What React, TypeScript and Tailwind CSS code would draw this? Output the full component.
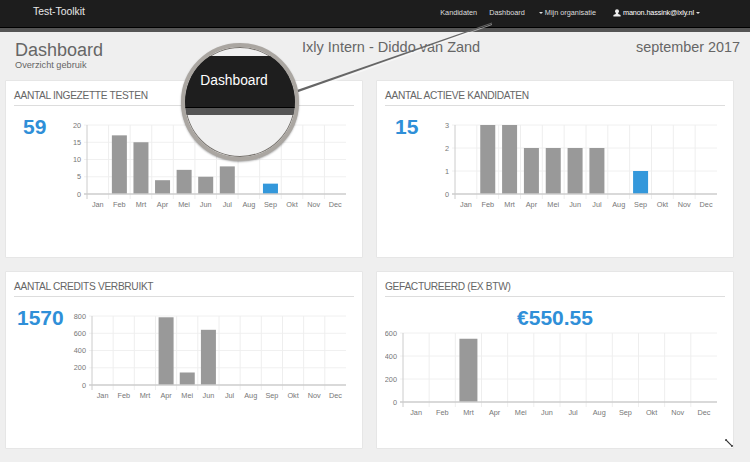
const MONTHS = ['Jan', 'Feb', 'Mrt', 'Apr', 'Mei', 'Jun', 'Jul', 'Aug', 'Sep', 'Okt', 'Nov', 'Dec']

const PLOT_TOP = 7
const PLOT_HEIGHT = 69

interface ChartProps {
  values: number[]
  max: number
  ticks: number
  axisWidth: number
  plotWidth: number
  barWidth: number
  blueIndex?: number
}

function Chart({ values, max, ticks, axisWidth, plotWidth, barWidth, blueIndex }: ChartProps) {
  const step = plotWidth / 12
  const bottom = PLOT_TOP + PLOT_HEIGHT

  return (
    <svg className="block shrink-0" height={bottom + 17} width={axisWidth + plotWidth + 2}>
      {Array.from({ length: ticks + 1 }, (_, i) => {
        const y = PLOT_TOP + (PLOT_HEIGHT * i) / ticks
        return (
          <g key={i}>
            {i < ticks && <line stroke="#f0f0f0" x1={axisWidth - 3} x2={axisWidth + plotWidth} y1={y} y2={y} />}
            <text fill="#777" fontSize="7.3" textAnchor="end" x={axisWidth - 6} y={y + 2.7}>
              {Math.round(max - (max * i) / ticks)}
            </text>
          </g>
        )
      })}
      {MONTHS.map((month, i) => {
        const x = axisWidth + step * i
        const center = x + step / 2
        const height = (values[i] / max) * PLOT_HEIGHT
        return (
          <g key={month}>
            <line stroke={i === 0 ? '#ccc' : '#eee'} x1={x} x2={x} y1={PLOT_TOP} y2={bottom + 5} />
            {values[i] > 0 && (
              <rect
                fill={i === blueIndex ? '#3498db' : '#999'}
                height={height}
                width={barWidth}
                x={center - barWidth / 2}
                y={bottom - height}
              />
            )}
            <text fill="#777" fontSize="7.3" textAnchor="middle" x={center} y={bottom + 13}>
              {month}
            </text>
          </g>
        )
      })}
      <line stroke="#ccc" strokeWidth="1.4" x1={axisWidth - 3} x2={axisWidth + plotWidth} y1={bottom} y2={bottom} />
    </svg>
  )
}

function Card({ title, children }: { title?: string; children?: React.ReactNode }) {
  return (
    <section className="relative h-[178px] rounded-[1px] border border-[#e6e6e6] bg-white px-[8px]">
      <h2 className="h-[25px] border-b border-[#ddd] pt-[8px] text-[10.2px] leading-[13px] tracking-[-0.33px] text-[#666]">{title}</h2>
      {children}
    </section>
  )
}

function Total({ children }: { children: React.ReactNode }) {
  return <div className="text-[21px] leading-[24px] font-bold text-[#2f8fd8]">{children}</div>
}

function Caret() {
  return <span className="mb-[1px] inline-block border-x-[2.5px] border-t-[2.5px] border-x-transparent border-t-[#ddd]" />
}

function Magnifier() {
  return (
    <>
      <svg className="pointer-events-none absolute top-0 left-0" height="120" width="500">
        <polygon fill="#fff" opacity="0.5" points="297,93 492,24 492,25 297,95" />
        <polygon fill="#666" points="297,90 492,22.5 492,23.5 297,92.5" />
      </svg>
      <div className="absolute top-[43px] left-[181px] size-[118px] overflow-hidden rounded-full border-[4px] border-[#aaa6a1] bg-[#f0f0f0] shadow-[inset_0_0_0_1px_#77736e,0_1px_2px_rgba(0,0,0,0.35)]">
        <div className="mt-[9px] h-[51px] bg-[#1e1e1e] pt-[16px] pr-[12px] text-center text-[13.8px] leading-[18px] text-white">
          Dashboard
        </div>
        <div className="h-[8px] border-t border-black bg-[#555]" />
      </div>
    </>
  )
}

export default function App() {
  return (
    <div className="relative h-[462px] w-[750px] overflow-hidden bg-[#efefef] font-['Liberation_Sans',sans-serif]">
      <nav className="flex h-[32px] border-b-[4px] border-[#555] bg-[#1d1d1d] pt-[5px] shadow-[inset_0_-1px_0_#000]">
        <div className="ml-[33px] text-[10.4px] leading-[14px] text-[#e8e8e8]">Test-Toolkit</div>
        <div className="ml-auto flex items-center self-start pt-[2px] pr-[50px] text-[7.3px] leading-[12px] text-[#ddd]">
          <span>Kandidaten</span>
          <span className="ml-[12px]">Dashboard</span>
          <span className="ml-[14px] flex items-center gap-[2px]">
            <Caret />
            Mijn organisatie
          </span>
          <span className="ml-[17px] flex items-center gap-[2px] tracking-[-0.15px] text-white">
            <svg fill="#eee" height="8" viewBox="0 0 8 8" width="8">
              <circle cx="4" cy="2.2" r="2" />
              <path d="M3 3.8h2l.3 1.3L7.6 6v1.4H.4V6l2.3-.9z" />
            </svg>
            manon.hassink@ixly.nl
            <Caret />
          </span>
        </div>
      </nav>

      <header className="flex h-[48px] pr-[10px] pl-[15px] text-[#666]">
        <div className="pt-[8px]">
          <h1 className="text-[18px] leading-[20px]">Dashboard</h1>
          <p className="text-[9.2px] leading-[10px]">Overzicht gebruik</p>
        </div>
        <div className="ml-[199px] pt-[6px] text-[14.5px] leading-[18px]">Ixly Intern - Diddo van Zand</div>
        <div className="ml-auto pt-[6px] text-[14.4px] leading-[18px]">september 2017</div>
      </header>

      <main className="grid w-[750px] grid-cols-[358px_358px] gap-x-[13px] gap-y-[13px] pl-[5px]">
        <Card title="AANTAL INGEZETTE TESTEN">
          <div className="flex pt-[9px]">
            <div className="w-[55px] shrink-0 pl-[9px]">
              <Total>59</Total>
            </div>
            <div className="mt-[2.5px]">
              <Chart axisWidth={18} barWidth={15} blueIndex={8} max={20} plotWidth={259} ticks={4} values={[0, 17, 15, 4, 7, 5, 8, 0, 3, 0, 0, 0]} />
            </div>
          </div>
        </Card>
        <Card title="AANTAL ACTIEVE KANDIDATEN">
          <div className="flex pt-[9px]">
            <div className="w-[54px] shrink-0 pl-[10px]">
              <Total>15</Total>
            </div>
            <div className="mt-[2.5px]">
              <Chart axisWidth={16} barWidth={15} blueIndex={8} max={3} plotWidth={262} ticks={3} values={[0, 3, 3, 2, 2, 2, 2, 0, 1, 0, 0, 0]} />
            </div>
          </div>
        </Card>
        <Card title="AANTAL CREDITS VERBRUIKT">
          <div className="flex pt-[9px]">
            <div className="w-[53px] shrink-0 pl-[3px]">
              <Total>1570</Total>
            </div>
            <div className="mt-[2.5px]">
              <Chart axisWidth={25} barWidth={15} max={800} plotWidth={254} ticks={4} values={[0, 0, 0, 785, 145, 640, 0, 0, 0, 0, 0, 0]} />
            </div>
          </div>
        </Card>
        <Card title="GEFACTUREERD (EX BTW)">
          <div className="pt-[9px] text-center">
            <Total>€550.55</Total>
          </div>
          <div className="-mt-[4.5px]">
            <Chart axisWidth={18} barWidth={18} max={600} plotWidth={314} ticks={3} values={[0, 0, 550, 0, 0, 0, 0, 0, 0, 0, 0, 0]} />
          </div>
          <svg className="absolute right-0 bottom-[1px]" fill="none" height="8" stroke="#333" strokeWidth="1.3" viewBox="0 0 9 9" width="8">
            <path d="M1 1l7 7" />
            <path d="M0.5 2.2V.5H2.2M6.8 8.5h1.7V6.8" strokeWidth="0.9" />
          </svg>
        </Card>
        <Card />
        <Card />
      </main>

      <Magnifier />
    </div>
  )
}
